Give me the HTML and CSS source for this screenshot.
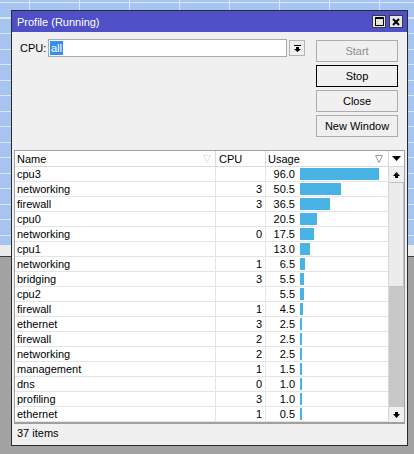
FILE: index.html
```html
<!DOCTYPE html>
<html lang="en">

<head>
    <meta charset="UTF-8">
    <meta name="viewport" content="width=device-width, initial-scale=1.0">
    <title>Profile (Running)</title>

    <link rel="stylesheet" href="styles.css">
</head>

<body>

    <div class="desktop">
        <div class="window">

            <!-- Title Bar -->
            <div class="titlebar">
                <span class="title">Profile (Running)</span>
                <div class="title-btns">
                    <span class="tbtn">
                        <svg width="9" height="9" viewBox="0 0 9 9"><rect x="0.5" y="0.5" width="8" height="8" fill="none" stroke="#000"/><rect x="0" y="0" width="9" height="2" fill="#000"/></svg>
                    </span>
                    <span class="tbtn">
                        <svg width="8" height="8" viewBox="0 0 8 8"><path d="M1 1L7 7M7 1L1 7" stroke="#000" stroke-width="2"/></svg>
                    </span>
                </div>
            </div>

            <!-- CPU Selector and Actions -->
            <div class="panel">
                <div class="cpu-row">
                    <span class="cpu-label">CPU:</span>
                    <div class="combo"><span class="sel">all</span></div>
                    <span class="drop">
                        <svg width="7" height="7" viewBox="0 0 7 7"><rect x="0" y="0" width="7" height="1"/><path d="M2 2h3v2h2L3.5 7 0 4h2z"/></svg>
                    </span>
                </div>
                <div class="actions">
                    <button disabled>Start</button>
                    <button class="default">Stop</button>
                    <button>Close</button>
                    <button>New Window</button>
                </div>
            </div>

            <!-- Profile List -->
            <div class="list">
                <div class="head">
                    <div class="h-cell h-name">Name
                        <svg class="sort faint" width="8" height="8" viewBox="0 0 8 8"><path d="M0.5 0.5h7L4 7.5z" fill="none"/></svg>
                    </div>
                    <div class="h-cell h-cpu">CPU</div>
                    <div class="h-cell h-usage">Usage
                        <svg class="sort" width="8" height="8" viewBox="0 0 8 8"><path d="M0.5 0.5h7L4 7.5z" fill="none"/></svg>
                    </div>
                    <div class="h-chooser">
                        <svg width="9" height="5" viewBox="0 0 9 5"><path d="M0 0h9L4.5 5z"/></svg>
                    </div>
                </div>

                <div class="list-body">
                    <div class="rows">
                        <div class="row"><span class="c-name">cpu3</span><span class="c-cpu"></span><span class="c-usage"><span class="num">96.0</span><span class="bar" style="width:79px"></span></span></div>
                        <div class="row"><span class="c-name">networking</span><span class="c-cpu">3</span><span class="c-usage"><span class="num">50.5</span><span class="bar" style="width:41px"></span></span></div>
                        <div class="row"><span class="c-name">firewall</span><span class="c-cpu">3</span><span class="c-usage"><span class="num">36.5</span><span class="bar" style="width:30px"></span></span></div>
                        <div class="row"><span class="c-name">cpu0</span><span class="c-cpu"></span><span class="c-usage"><span class="num">20.5</span><span class="bar" style="width:17px"></span></span></div>
                        <div class="row"><span class="c-name">networking</span><span class="c-cpu">0</span><span class="c-usage"><span class="num">17.5</span><span class="bar" style="width:14px"></span></span></div>
                        <div class="row"><span class="c-name">cpu1</span><span class="c-cpu"></span><span class="c-usage"><span class="num">13.0</span><span class="bar" style="width:10px"></span></span></div>
                        <div class="row"><span class="c-name">networking</span><span class="c-cpu">1</span><span class="c-usage"><span class="num">6.5</span><span class="bar" style="width:5px"></span></span></div>
                        <div class="row"><span class="c-name">bridging</span><span class="c-cpu">3</span><span class="c-usage"><span class="num">5.5</span><span class="bar" style="width:4px"></span></span></div>
                        <div class="row"><span class="c-name">cpu2</span><span class="c-cpu"></span><span class="c-usage"><span class="num">5.5</span><span class="bar" style="width:4px"></span></span></div>
                        <div class="row"><span class="c-name">firewall</span><span class="c-cpu">1</span><span class="c-usage"><span class="num">4.5</span><span class="bar" style="width:3px"></span></span></div>
                        <div class="row"><span class="c-name">ethernet</span><span class="c-cpu">3</span><span class="c-usage"><span class="num">2.5</span><span class="bar" style="width:2px"></span></span></div>
                        <div class="row"><span class="c-name">firewall</span><span class="c-cpu">2</span><span class="c-usage"><span class="num">2.5</span><span class="bar" style="width:2px"></span></span></div>
                        <div class="row"><span class="c-name">networking</span><span class="c-cpu">2</span><span class="c-usage"><span class="num">2.5</span><span class="bar" style="width:2px"></span></span></div>
                        <div class="row"><span class="c-name">management</span><span class="c-cpu">1</span><span class="c-usage"><span class="num">1.5</span><span class="bar" style="width:2px"></span></span></div>
                        <div class="row"><span class="c-name">dns</span><span class="c-cpu">0</span><span class="c-usage"><span class="num">1.0</span><span class="bar" style="width:2px"></span></span></div>
                        <div class="row"><span class="c-name">profiling</span><span class="c-cpu">3</span><span class="c-usage"><span class="num">1.0</span><span class="bar" style="width:2px"></span></span></div>
                        <div class="row"><span class="c-name">ethernet</span><span class="c-cpu">1</span><span class="c-usage"><span class="num">0.5</span><span class="bar" style="width:2px"></span></span></div>
                    </div>

                    <!-- Vertical Scrollbar -->
                    <div class="vscroll">
                        <div class="sb-btn">
                            <svg width="7" height="6" viewBox="0 0 7 6"><path d="M3.5 0L7 4H5v2H2V4H0z"/></svg>
                        </div>
                        <div class="thumb"></div>
                        <div class="track"></div>
                        <div class="sb-btn">
                            <svg width="7" height="6" viewBox="0 0 7 6"><path d="M3.5 6L7 2H5V0H2v2H0z"/></svg>
                        </div>
                    </div>
                </div>
            </div>

            <!-- Status Bar -->
            <div class="status">37 items</div>
        </div>
    </div>

</body>

</html>
```

FILE: styles.css
```css
/* General Styling */
* {
    box-sizing: border-box;
}

body {
    margin: 0;
    font-family: "Liberation Sans", Arial, sans-serif;
    font-size: 11px;
    color: #000;
}

/* Desktop behind the window: a blue table on top, grey below */
.desktop {
    width: 414px;
    height: 454px;
    padding: 10px 0 0 11px;
    overflow: hidden;
    background:
        linear-gradient(to bottom, transparent 245px, #ececec 245px, #ececec 256px, #3c3c3c 256px, #3c3c3c 257px, #a3a3a3 257px),
        repeating-linear-gradient(to right, transparent 0 29px, #dbe7f8 29px 30px, transparent 30px 50px),
        repeating-linear-gradient(to bottom, transparent 0 2px, #dbe7f8 2px 3px, transparent 3px 15.5px),
        #a6c4f0;
}

/* Window */
.window {
    width: 397px;
    height: 436px;
    border: 1px solid #2a2a2a;
    background-color: #f0f0f0;
    display: flex;
    flex-direction: column;
}

.titlebar {
    height: 21px;
    flex-shrink: 0;
    background-color: #4f4fc8;
    color: #fff;
    display: flex;
    align-items: center;
    padding: 0 4px 0 5px;
}

.title {
    flex: 1;
}

.title-btns {
    display: flex;
    gap: 3px;
}

.tbtn {
    width: 14px;
    height: 13px;
    background-color: #e6e6e6;
    border: 1px solid #3a3a3a;
    display: flex;
    align-items: center;
    justify-content: center;
}

/* CPU Selector and Buttons */
.panel {
    height: 118px;
    flex-shrink: 0;
    display: flex;
    padding: 7px 9px 0 8px;
}

.cpu-row {
    display: flex;
    align-items: flex-start;
}

.cpu-label {
    width: 28px;
    line-height: 18px;
}

.combo {
    width: 239px;
    height: 18px;
    background-color: #fff;
    border: 1px solid #a9a9a9;
    padding: 1px;
}

.sel {
    display: inline-block;
    background-color: #3390ee;
    color: #fff;
    line-height: 14px;
    padding: 0 1px;
}

.drop {
    width: 16px;
    height: 16px;
    margin: 1px 0 0 2px;
    border: 1px solid #b4b4b4;
    background-color: #f0f0f0;
    display: flex;
    align-items: center;
    justify-content: center;
}

.actions {
    margin-left: auto;
    margin-top: 1px;
    display: flex;
    flex-direction: column;
    gap: 3px;
}

.actions button {
    width: 82px;
    height: 22px;
    padding: 0;
    font: inherit;
    color: #000;
    background-color: #f0f0f0;
    border: 1px solid #adadad;
}

.actions button.default {
    border-color: #000;
}

.actions button:disabled {
    color: #8d8d8d;
}

/* Profile List */
.list {
    margin: 0 2px;
    height: 274px;
    flex-shrink: 0;
    background-color: #fff;
    border: 1px solid #a0a0a0;
    border-bottom-width: 2px;
    display: flex;
    flex-direction: column;
}

.head {
    display: flex;
    height: 16px;
    flex-shrink: 0;
    border-bottom: 1px solid #dadada;
}

.h-cell {
    display: flex;
    align-items: center;
    justify-content: space-between;
    padding-left: 2px;
    border-right: 1px solid #dadada;
}

.h-name {
    width: 201px;
}

.h-cpu {
    width: 50px;
    padding-left: 3px;
}

.h-usage {
    width: 122px;
    border-right: none;
}

.sort {
    stroke: #9c9c9c;
    margin-right: 5px;
}

.sort.faint {
    stroke: #e2e2e2;
    margin-right: 4px;
}

.h-chooser {
    width: 16px;
    display: flex;
    align-items: center;
    justify-content: center;
    border-left: 1px solid #d6d6d6;
}

.list-body {
    display: flex;
    height: 255px;
}

.rows {
    width: 373px;
}

.row {
    display: flex;
    height: 15px;
    line-height: 14px;
    border-bottom: 1px solid #e4e4e4;
}

.c-name {
    width: 201px;
    padding-left: 2px;
    border-right: 1px solid #e4e4e4;
}

.c-cpu {
    width: 50px;
    padding-right: 3px;
    text-align: right;
    border-right: 1px solid #e4e4e4;
}

.c-usage {
    width: 122px;
    display: flex;
    align-items: center;
}

.num {
    width: 29px;
    text-align: right;
}

.bar {
    height: 12px;
    margin-left: 5px;
    background-color: #4ab3e6;
}

/* Scrollbar */
.vscroll {
    width: 16px;
    display: flex;
    flex-direction: column;
    border-left: 1px solid #d6d6d6;
    background-color: #c8c8c8;
}

.sb-btn {
    height: 15px;
    flex-shrink: 0;
    background-color: #f0f0f0;
    display: flex;
    align-items: center;
    justify-content: center;
}

.thumb {
    height: 105px;
    background-color: #ececec;
    border: 1px solid #c2c2c2;
    border-left: none;
}

.track {
    flex: 1;
}

/* Status Bar */
.status {
    flex: 1;
    padding-left: 5px;
    line-height: 19px;
}
```
